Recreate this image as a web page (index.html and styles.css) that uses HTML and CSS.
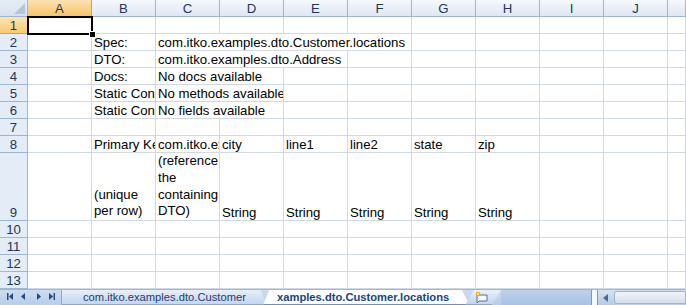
FILE: index.html
```html
<!DOCTYPE html>
<html>
<head>
<meta charset="utf-8">
<link rel="stylesheet" href="styles.css">
</head>
<body>
<div class="app">
  <div class="sheet">
    <!-- header row -->
    <div class="corner"><span class="tri"></span></div>
    <div class="ch sel">A</div><div class="ch">B</div><div class="ch">C</div><div class="ch">D</div><div class="ch">E</div><div class="ch">F</div><div class="ch">G</div><div class="ch">H</div><div class="ch">I</div><div class="ch">J</div><div class="ch"></div>

    <!-- row 1 -->
    <div class="rh sel">1</div>
    <div class="c"></div><div class="c"></div><div class="c"></div><div class="c"></div><div class="c"></div><div class="c"></div><div class="c"></div><div class="c"></div><div class="c"></div><div class="c"></div><div class="c"></div>

    <!-- row 2 -->
    <div class="rh">2</div>
    <div class="c"></div><div class="c">Spec:</div><div class="c s4">com.itko.examples.dto.Customer.locations</div><div class="c"></div><div class="c"></div><div class="c"></div><div class="c"></div><div class="c"></div>

    <!-- row 3 -->
    <div class="rh">3</div>
    <div class="c"></div><div class="c">DTO:</div><div class="c s3">com.itko.examples.dto.Address</div><div class="c"></div><div class="c"></div><div class="c"></div><div class="c"></div><div class="c"></div><div class="c"></div>

    <!-- row 4 -->
    <div class="rh">4</div>
    <div class="c"></div><div class="c">Docs:</div><div class="c s2">No docs available</div><div class="c"></div><div class="c"></div><div class="c"></div><div class="c"></div><div class="c"></div><div class="c"></div><div class="c"></div>

    <!-- row 5 -->
    <div class="rh">5</div>
    <div class="c"></div><div class="c">Static Constructors:</div><div class="c s2">No methods available</div><div class="c"></div><div class="c"></div><div class="c"></div><div class="c"></div><div class="c"></div><div class="c"></div><div class="c"></div>

    <!-- row 6 -->
    <div class="rh">6</div>
    <div class="c"></div><div class="c">Static Constants:</div><div class="c s2">No fields available</div><div class="c"></div><div class="c"></div><div class="c"></div><div class="c"></div><div class="c"></div><div class="c"></div><div class="c"></div>

    <!-- row 7 -->
    <div class="rh">7</div>
    <div class="c"></div><div class="c"></div><div class="c"></div><div class="c"></div><div class="c"></div><div class="c"></div><div class="c"></div><div class="c"></div><div class="c"></div><div class="c"></div><div class="c"></div>

    <!-- row 8 -->
    <div class="rh">8</div>
    <div class="c"></div><div class="c">Primary Key</div><div class="c">com.itko.examples.dto.Customer</div><div class="c">city</div><div class="c">line1</div><div class="c">line2</div><div class="c">state</div><div class="c">zip</div><div class="c"></div><div class="c"></div><div class="c"></div>

    <!-- row 9 -->
    <div class="rh">9</div>
    <div class="c"></div><div class="c wrap">(unique per row)</div><div class="c wrap">(reference the containing DTO)</div><div class="c">String</div><div class="c">String</div><div class="c">String</div><div class="c">String</div><div class="c">String</div><div class="c"></div><div class="c"></div><div class="c"></div>

    <!-- rows 10-13 -->
    <div class="rh">10</div>
    <div class="c"></div><div class="c"></div><div class="c"></div><div class="c"></div><div class="c"></div><div class="c"></div><div class="c"></div><div class="c"></div><div class="c"></div><div class="c"></div><div class="c"></div>
    <div class="rh">11</div>
    <div class="c"></div><div class="c"></div><div class="c"></div><div class="c"></div><div class="c"></div><div class="c"></div><div class="c"></div><div class="c"></div><div class="c"></div><div class="c"></div><div class="c"></div>
    <div class="rh">12</div>
    <div class="c"></div><div class="c"></div><div class="c"></div><div class="c"></div><div class="c"></div><div class="c"></div><div class="c"></div><div class="c"></div><div class="c"></div><div class="c"></div><div class="c"></div>
    <div class="rh">13</div>
    <div class="c"></div><div class="c"></div><div class="c"></div><div class="c"></div><div class="c"></div><div class="c"></div><div class="c"></div><div class="c"></div><div class="c"></div><div class="c"></div><div class="c"></div>

    <div class="active-cell"><span class="handle"></span></div>
  </div>

  <div class="tabbar">
    <div class="nav">
      <svg width="60" height="16" viewBox="0 0 60 16">
        <g fill="#1f4a86">
          <rect x="7" y="4" width="1.5" height="7"/>
          <polygon points="9,7.5 13,4 13,11"/>
          <polygon points="21,7.5 25,4 25,11"/>
          <polygon points="37,4 41,7.5 37,11"/>
          <polygon points="49,4 53,7.5 49,11"/>
          <rect x="53.5" y="4" width="1.5" height="7"/>
        </g>
      </svg>
    </div>
    <div class="tab">com.itko.examples.dto.Customer</div>
    <div class="tab active">xamples.dto.Customer.locations</div>
    <div class="tab insert">
      <svg width="20" height="14" viewBox="0 0 20 14">
        <path d="M4 5 h10 v6 h-8 l-2 2 z" fill="#f4f7fb" stroke="#5d6f88" stroke-width="1"/>
        <circle cx="5" cy="4" r="2.2" fill="#f7a500"/>
        <circle cx="5" cy="4" r="1" fill="#fff3c0"/>
      </svg>
    </div>
    <div class="fill"></div>
    <div class="splitter"></div>
    <div class="sbtn">
      <svg width="14" height="16" viewBox="0 0 14 16"><polygon points="4,8 9,4 9,12" fill="#4a6a96"/></svg>
    </div>
    <div class="track"></div>
  </div>
</div>
</body>
</html>
```

FILE: styles.css
```css
html, body {
  margin: 0;
  padding: 0;
  background: #ffffff;
  overflow: hidden;
}

.app {
  width: 686px;
  height: 305px;
  overflow: hidden;
  font-family: "Liberation Sans", Arial, sans-serif;
  font-size: 13.2px;
}

.sheet {
  position: relative;
  display: grid;
  grid-template-columns: 28px repeat(10, 64px) 18px;
  grid-template-rows: 17px repeat(8, 17px) 68px repeat(4, 17px);
  width: 686px;
  height: 289px;
  overflow: hidden;
}

.corner {
  position: relative;
  box-sizing: border-box;
  background: linear-gradient(#e6edf6, #d7e1ee);
  border-right: 1px solid #9eb6ce;
  border-bottom: 1px solid #9eb6ce;
}

.corner .tri {
  position: absolute;
  right: 2px;
  bottom: 2px;
  width: 0;
  height: 0;
  border-left: 11px solid transparent;
  border-bottom: 11px solid #b4c5dc;
}

.ch {
  box-sizing: border-box;
  background: linear-gradient(#f6f8fc, #dfe7f2);
  border-right: 1px solid #9eb6ce;
  border-bottom: 1px solid #9eb6ce;
  color: #1f3658;
  text-align: center;
  line-height: 17px;
}

.ch.sel {
  background: linear-gradient(#fbe2b3, #f7c467);
  border-right-color: #f29536;
  border-bottom-color: #f29536;
}

.rh {
  box-sizing: border-box;
  background: #e4ecf7;
  border-right: 1px solid #9eb6ce;
  border-bottom: 1px solid #9eb6ce;
  color: #1f3658;
  text-align: center;
  display: flex;
  align-items: flex-end;
  justify-content: center;
  line-height: 14px;
}

.rh.sel {
  background: linear-gradient(#fde3b4, #f8ca73);
  border-right-color: #f29536;
  border-bottom-color: #f29536;
}

.c {
  box-sizing: border-box;
  border-right: 1px solid #d0d7e5;
  border-bottom: 1px solid #d0d7e5;
  color: #000;
  white-space: nowrap;
  overflow: hidden;
  padding: 0 0 0 2px;
  display: flex;
  align-items: flex-end;
  line-height: 14px;
}

.c.s2 { grid-column: span 2; }
.c.s3 { grid-column: span 3; }
.c.s4 { grid-column: span 4; }

.c.wrap {
  white-space: normal;
  line-height: 16.7px;
  padding-right: 0;
}

.active-cell {
  position: absolute;
  left: 27px;
  top: 16px;
  width: 66px;
  height: 19px;
  box-sizing: border-box;
  border: 2px solid #000;
}

.active-cell .handle {
  position: absolute;
  right: -5px;
  bottom: -5px;
  width: 5px;
  height: 5px;
  background: #000;
  border: 1px solid #fff;
}

.tabbar {
  display: flex;
  height: 16px;
  background: linear-gradient(#cddcef, #b9cde8);
  border-top: 1px solid #9eb6ce;
  box-sizing: border-box;
  align-items: stretch;
}

.nav {
  width: 61px;
  display: flex;
  align-items: center;
}

.nav svg { display: block; margin-top: -1px; }

.tab {
  box-sizing: border-box;
  height: 15px;
  font-size: 11.2px;
  line-height: 14px;
  color: #1f3c6b;
  white-space: nowrap;
  overflow: hidden;
}

.tab:not(.active):not(.insert) {
  width: 206px;
  padding-left: 21px;
  background: linear-gradient(#e8eff8, #c5d6ee);
  border-left: 1px solid #8da8cb;
  border-bottom: 1px solid #8da8cb;
  clip-path: polygon(0 0, 97% 0, 100% 100%, 0 100%);
}

.tab.active {
  width: 207px;
  margin-left: -4px;
  padding-left: 14px;
  background: #ffffff;
  font-weight: bold;
  color: #15428b;
  border-bottom: 1px solid #6f8fbd;
  clip-path: polygon(0 100%, 3% 0, 96% 0, 100% 100%);
}

.tab.insert {
  width: 36px;
  margin-left: -5px;
  padding-left: 8px;
  background: linear-gradient(#e9f0f9, #c4d5ee);
  border-bottom: 1px solid #8da8cb;
  clip-path: polygon(0 100%, 25% 0, 100% 0, 75% 100%);
}

.tab.insert svg { display: block; }

.fill {
  flex: 1;
  background: linear-gradient(#bfd1ea, #a9c1e3);
}

.splitter {
  width: 5px;
  background: #f4f7fb;
  border-left: 1px solid #7d97bb;
  border-right: 1px solid #7d97bb;
}

.sbtn {
  width: 16px;
  background: linear-gradient(#d6e2f2, #b7cbe6);
  display: flex;
  align-items: center;
  justify-content: center;
}

.sbtn svg { display: block; }

.track {
  flex: 0 0 70px;
  margin: 1px 0 1px 0;
  border: 1px solid #9eb6ce;
  border-radius: 3px 0 0 3px;
  background: linear-gradient(#f1f5fa, #d3deec);
}
```
